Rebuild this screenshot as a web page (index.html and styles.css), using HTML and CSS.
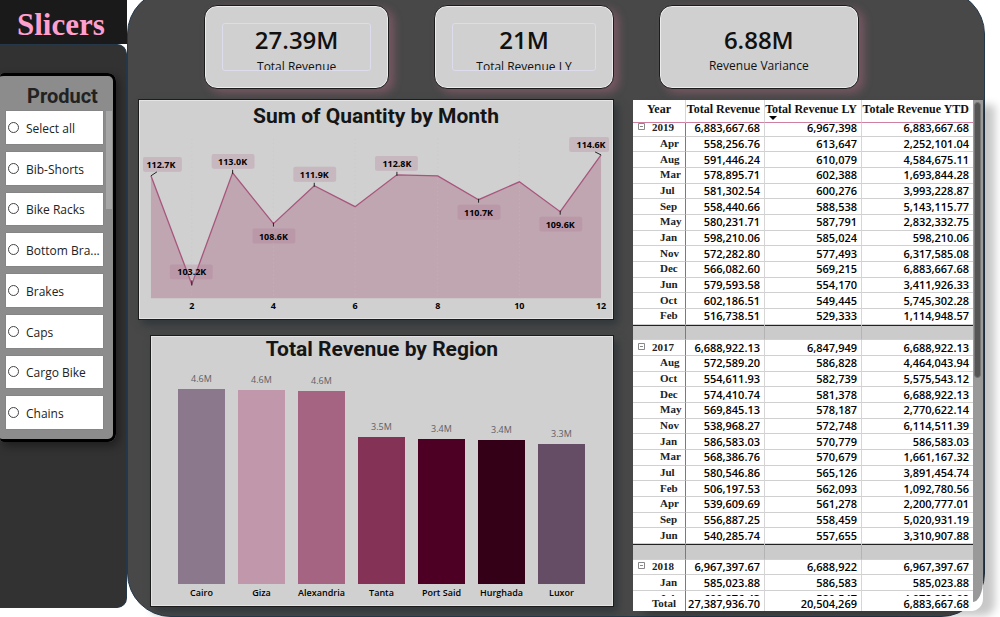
FILE: index.html
```html
<!DOCTYPE html>
<html lang="en">
<head>
  <meta charset="UTF-8" />
  <title>Sales Dashboard</title>
  <link rel="stylesheet" href="styles.css">
</head>
<body>
  <aside class="sidebar">
    <h1 class="sidebar-title">Slicers</h1>
    <div class="sidebar-panel">
      <fieldset class="slicer">
        <legend class="slicer-title">Product</legend>
        <div class="slicer-body">
          <div class="slicer-list">
            <label class="slicer-item"><input type="radio" name="product" /><span>Select all</span></label>
            <label class="slicer-item"><input type="radio" name="product" /><span>Bib-Shorts</span></label>
            <label class="slicer-item"><input type="radio" name="product" /><span>Bike Racks</span></label>
            <label class="slicer-item"><input type="radio" name="product" /><span>Bottom Bra...</span></label>
            <label class="slicer-item"><input type="radio" name="product" /><span>Brakes</span></label>
            <label class="slicer-item"><input type="radio" name="product" /><span>Caps</span></label>
            <label class="slicer-item"><input type="radio" name="product" /><span>Cargo Bike</span></label>
            <label class="slicer-item"><input type="radio" name="product" /><span>Chains</span></label>
          </div>
          <div class="slicer-scroll"></div>
        </div>
      </fieldset>
    </div>
  </aside>

  <main class="board">
    <section class="kpis">
      <div class="kpi">
        <div class="kpi-frame">
          <div class="kpi-value">27.39M</div>
          <div class="kpi-label">Total Revenue</div>
        </div>
      </div>
      <div class="kpi">
        <div class="kpi-frame">
          <div class="kpi-value">21M</div>
          <div class="kpi-label">Total Revenue LY</div>
        </div>
      </div>
      <div class="kpi">
        <div class="kpi-frame plain">
          <div class="kpi-value">6.88M</div>
          <div class="kpi-label">Revenue Variance</div>
        </div>
      </div>
    </section>

    <div class="content">
      <div class="charts">
        <section class="card">
          <h2>Sum of Quantity by Month</h2>
          <svg class="area-chart" viewBox="0 0 476 187">
            <polygon class="area" points="12,43 53,152 94,40 135,91 176,53 217,74 259,42 300,43 341,67 382,49 423,79 464,22 464,166 12,166" />
            <g class="grid-lines">
              <path d="M53 6V166M135 6V166M217 6V166M300 6V166M382 6V166" />
            </g>
            <polyline class="line" points="12,43 53,152 94,40 135,91 176,53 217,74 259,42 300,43 341,67 382,49 423,79 464,22" />
            <path class="ticks" d="M12 43L18 39M53 148V153M94 37V41M135 90V94M176 50V54M259 39V43M341 66V70M423 78V82M464 22L458 19" />
            <g class="tags">
              <rect x="4" y="24" width="39" height="15" rx="2" />
              <rect x="31" y="132" width="43" height="15" rx="2" />
              <rect x="73" y="21" width="43" height="15" rx="2" />
              <rect x="114" y="96" width="43" height="15" rx="2" />
              <rect x="155" y="34" width="43" height="15" rx="2" />
              <rect x="237" y="23" width="43" height="15" rx="2" />
              <rect x="320" y="72" width="43" height="15" rx="2" />
              <rect x="402" y="84" width="43" height="15" rx="2" />
              <rect x="432" y="4" width="40" height="15" rx="2" />
            </g>
            <g class="tag-text">
              <text x="22" y="35">112.7K</text>
              <text x="53" y="143">103.2K</text>
              <text x="94" y="32">113.0K</text>
              <text x="135" y="107">108.6K</text>
              <text x="176" y="45">111.9K</text>
              <text x="259" y="34">112.8K</text>
              <text x="341" y="83">110.7K</text>
              <text x="423" y="95">109.6K</text>
              <text x="454" y="15">114.6K</text>
              <text x="53" y="177">2</text>
              <text x="135" y="177">4</text>
              <text x="217" y="177">6</text>
              <text x="300" y="177">8</text>
              <text x="382" y="177">10</text>
              <text x="464" y="177">12</text>
            </g>
          </svg>
        </section>

        <section class="card card-bars">
          <h2>Total Revenue by Region</h2>
          <div class="bars" id="bars"></div>
        </section>
      </div>

      <section class="matrix">
        <div class="matrix-scroll" id="matrixScroll">
          <table>
            <thead>
              <tr>
                <th class="year-head">Year</th>
                <th>Total Revenue</th>
                <th class="sorted">Total Revenue LY</th>
                <th>Totale Revenue YTD</th>
              </tr>
            </thead>
            <tbody id="matrixRows"></tbody>
            <tfoot>
              <tr><th>Total</th><td>27,387,936.70</td><td>20,504,269</td><td>6,883,667.68</td></tr>
            </tfoot>
          </table>
        </div>
        <div class="matrix-track"><div class="matrix-thumb"></div></div>
      </section>
    </div>
  </main>

  <script>
    const regions = [
      { name: 'Cairo', label: '4.6M', height: 195, color: '#8b788c' },
      { name: 'Giza', label: '4.6M', height: 194, color: '#c198ab' },
      { name: 'Alexandria', label: '4.6M', height: 193, color: '#a56582' },
      { name: 'Tanta', label: '3.5M', height: 147, color: '#843357' },
      { name: 'Port Said', label: '3.4M', height: 145, color: '#4d0023' },
      { name: 'Hurghada', label: '3.4M', height: 144, color: '#330018' },
      { name: 'Luxor', label: '3.3M', height: 140, color: '#664d66' }
    ];

    document.getElementById('bars').innerHTML = regions.map(r => `
      <div class="bar-col">
        <span class="bar-value">${r.label}</span>
        <div class="bar" style="height:${r.height}px;background:${r.color}"></div>
        <span class="bar-name">${r.name}</span>
      </div>`).join('');

    const years = [
      [
        ['2019', '6,883,667.68', '6,967,398', '6,883,667.68'],
        ['Apr', '558,256.76', '613,647', '2,252,101.04'],
        ['Aug', '591,446.24', '610,079', '4,584,675.11'],
        ['Mar', '578,895.71', '602,388', '1,693,844.28'],
        ['Jul', '581,302.54', '600,276', '3,993,228.87'],
        ['Sep', '558,440.66', '588,538', '5,143,115.77'],
        ['May', '580,231.71', '587,791', '2,832,332.75'],
        ['Jan', '598,210.06', '585,024', '598,210.06'],
        ['Nov', '572,282.80', '577,493', '6,317,585.08'],
        ['Dec', '566,082.60', '569,215', '6,883,667.68'],
        ['Jun', '579,593.58', '554,170', '3,411,926.33'],
        ['Oct', '602,186.51', '549,445', '5,745,302.28'],
        ['Feb', '516,738.51', '529,333', '1,114,948.57']
      ],
      [
        ['2017', '6,688,922.13', '6,847,949', '6,688,922.13'],
        ['Aug', '572,589.20', '586,828', '4,464,043.94'],
        ['Oct', '554,611.93', '582,739', '5,575,543.12'],
        ['Dec', '574,410.74', '581,378', '6,688,922.13'],
        ['May', '569,845.13', '578,187', '2,770,622.14'],
        ['Nov', '538,968.27', '572,748', '6,114,511.39'],
        ['Jan', '586,583.03', '570,779', '586,583.03'],
        ['Mar', '568,386.76', '570,679', '1,661,167.32'],
        ['Jul', '580,546.86', '565,126', '3,891,454.74'],
        ['Feb', '506,197.53', '562,093', '1,092,780.56'],
        ['Apr', '539,609.69', '561,278', '2,200,777.01'],
        ['Sep', '556,887.25', '558,459', '5,020,931.19'],
        ['Jun', '540,285.74', '557,655', '3,310,907.88']
      ],
      [
        ['2018', '6,967,397.67', '6,688,922', '6,967,397.67'],
        ['Jan', '585,023.88', '586,583', '585,023.88'],
        ['Jul', '600,276.43', '580,547', '4,078,230.09']
      ]
    ];

    const toggle = '<svg class="toggle" viewBox="0 0 7 7"><path d="M.5 .5H6.5V6.5H.5ZM2 3.5H5" /></svg>';
    const spacer = '<tr class="spacer"><th></th><td>&nbsp;</td><td></td><td></td></tr>';

    document.getElementById('matrixRows').innerHTML = years.map(rows => rows.map((row, i) => {
      const head = i === 0 ? `<th class="year">${toggle}${row[0]}</th>` : `<th>${row[0]}</th>`;
      return `<tr>${head}${row.slice(1).map(v => `<td>${v}</td>`).join('')}</tr>`;
    }).join('')).join(spacer);

    document.getElementById('matrixScroll').scrollTop = 2;
  </script>
</body>
</html>
```
FILE: styles.css
```css
* {
  box-sizing: border-box;
}

body {
  margin: 0;
  display: flex;
  min-height: 100vh;
  overflow: hidden;
  background: #fff;
  font-family: "Open Sans", "Noto Sans", sans-serif;
  color: #111;
}

h1, h2 {
  margin: 0;
}

/* Sidebar */
.sidebar {
  width: 127px;
  flex: none;
  display: flex;
  flex-direction: column;
  padding-bottom: 9px;
}

.sidebar-title {
  height: 44px;
  padding-left: 17px;
  background: #1a1a1a;
  color: #ff9fce;
  font: bold 31px/49px "Liberation Serif", serif;
}

.sidebar-panel {
  flex: 1;
  padding-top: 28px;
  background: #323232;
  border: solid #24384a;
  border-width: 1px 1px 1px 0;
  border-radius: 0 10px 10px 0;
}

.slicer {
  width: 116px;
  height: 369px;
  margin: 0;
  padding: 35px 1px 0 6px;
  background: #8c8c8c;
  border: solid #000;
  border-width: 3px 3px 3px 0;
  border-radius: 4px 8px 8px 4px;
  box-shadow: 3px 4px 10px rgba(0, 0, 0, 0.4);
}

.slicer-title {
  float: left;
  width: 100%;
  margin-top: -29px;
  padding: 0 0 0 21px;
  color: #222;
  font: bold 20px/28px Roboto, sans-serif;
}

.slicer-body {
  clear: both;
  display: flex;
  gap: 3px;
}

.slicer-list {
  flex: 1;
  height: 318px;
  display: flex;
  flex-direction: column;
  gap: 8px;
}

.slicer-item {
  flex: 1;
  display: flex;
  align-items: center;
  gap: 7px;
  padding-left: 2px;
  background: #fff;
  color: #222;
  font-size: 12px;
  line-height: 18px;
  white-space: nowrap;
  box-shadow: 0 0 1px #666;
}

.slicer-item span {
  padding-top: 3px;
}

.slicer-item input {
  appearance: none;
  width: 11px;
  height: 11px;
  flex: none;
  margin: 0;
  border: 1px solid #444;
  border-radius: 50%;
}

.slicer-item input:checked {
  background: #444;
}

.slicer-scroll {
  width: 6px;
  height: 98px;
  background: #a6a6a6;
}

/* Main board */
.board {
  flex: 1;
  min-width: 0;
  margin: -10px 15px 0 0;
  padding: 14px 1px 4px 10px;
  background: #484848;
  border: 1px solid #24384a;
  border-radius: 44px;
}

.kpis {
  display: grid;
  grid-template-columns: 185fr 179fr 200fr;
  gap: 45px;
  padding: 0 124px 10px 66px;
}

.kpi {
  min-width: 0;
  height: 84px;
  padding: 17px 17px 0;
  background: #d0d0d0;
  border: 1px solid #1c1c1c;
  border-radius: 13px;
  box-shadow: inset 0 0 0 1px #ececec, 5px 4px 9px rgba(190, 110, 140, 0.4);
  text-align: center;
}

.kpi-frame {
  height: 48px;
  overflow: hidden;
  border: 1px solid #dcdcec;
  border-radius: 3px;
}

.kpi-frame.plain {
  overflow: visible;
  border-color: transparent;
}

.kpi-value {
  font-size: 24px;
  font-weight: 600;
  line-height: 32px;
}

.kpi-label {
  font-size: 12px;
  line-height: 22px;
}

.plain .kpi-label {
  line-height: 20px;
}

.content {
  display: grid;
  grid-template-columns: 476fr 350fr;
  column-gap: 19px;
}

.charts {
  display: flex;
  flex-direction: column;
  gap: 15px;
}

.card {
  background: #d0d0d0;
  border: 1px solid #1c1c1c;
  box-shadow: inset 0 0 0 1px #e4e4e4, 4px 5px 8px rgba(40, 48, 52, 0.7);
}

.card h2 {
  color: #151515;
  font: bold 21px/33px Roboto, sans-serif;
  text-align: center;
}

.area-chart {
  display: block;
  width: 100%;
}

.area {
  fill: #bfa6b1;
}

.line {
  fill: none;
  stroke: #a8557c;
  stroke-width: 1.3;
}

.ticks {
  fill: none;
  stroke: #222;
}

.grid-lines {
  fill: none;
  stroke: #c8c2c5;
  stroke-opacity: 0.5;
  stroke-dasharray: 1 3;
}

.tags {
  fill: #b07792;
  fill-opacity: 0.28;
}

.tag-text {
  fill: #000;
  font-size: 9px;
  font-weight: 700;
  text-anchor: middle;
}

.card-bars {
  margin-left: 12px;
  height: 272px;
}

.card.card-bars h2 {
  line-height: 26px;
}

.bars {
  display: flex;
  align-items: flex-end;
  gap: 13px;
  height: 238px;
  padding: 0 28px 0 27px;
}

.bar-col {
  flex: 1;
  min-width: 0;
  display: flex;
  flex-direction: column;
  align-items: center;
}

.bar {
  width: 100%;
}

.bar-value {
  color: #605e66;
  font-size: 9px;
  line-height: 14px;
  padding-bottom: 3px;
}

.bar-name {
  color: #000;
  font-size: 9px;
  font-weight: 600;
  line-height: 14px;
  padding-top: 2px;
  white-space: nowrap;
}

/* Matrix */
.matrix {
  display: flex;
  align-self: start;
  height: 511px;
  margin-top: 1px;
  background: #fff;
  border-radius: 0 0 12px 0;
  box-shadow: 12px 5px 8px rgba(0, 0, 0, 0.22);
}

.matrix-scroll {
  flex: 1;
  overflow: hidden;
}

.matrix table {
  width: 100%;
  height: 524px;
  table-layout: fixed;
  border-collapse: separate;
  border-spacing: 0;
}

.matrix th,
.matrix td {
  padding: 0 4px 0 0;
  border-right: 1px solid #d6d6d6;
  border-bottom: 1px solid #d0d0d0;
  font-size: 11px;
  line-height: 14px;
  white-space: nowrap;
}

.matrix td {
  font-weight: 600;
  text-align: right;
  color: #000;
}

.matrix td:last-child,
.matrix thead th:last-child {
  border-right: 0;
}

.matrix tbody th,
.matrix tfoot th {
  padding: 0 0 2px 27px;
  border-right: 1px solid #d9478c;
  font-family: "Liberation Serif", serif;
  line-height: 12px;
  text-align: left;
  color: #222;
}

.matrix thead th {
  position: sticky;
  top: 0;
  height: 23px;
  padding-bottom: 5px;
  background: #fff;
  border-bottom: 1px solid #cf7fa0;
  font: bold 12px/16px "Liberation Serif", serif;
  text-align: right;
}

.matrix thead .year-head {
  width: 53px;
  padding-right: 0;
  text-align: center;
}

.matrix thead th:nth-child(2) {
  width: 79px;
}

.matrix thead th:nth-child(3) {
  width: 97px;
}

.matrix thead .sorted::after {
  content: "";
  position: absolute;
  left: 4px;
  bottom: 2px;
  border: 4px solid transparent;
  border-top-color: #000;
  border-bottom: 0;
}

.matrix tbody .year {
  padding-left: 5px;
}

.toggle {
  width: 7px;
  height: 7px;
  margin-right: 7px;
  vertical-align: 1px;
  fill: none;
  stroke: #888;
}

.matrix .spacer th,
.matrix .spacer td {
  background: #cbcbcb;
  border-right-color: #b4b4b4;
  box-shadow: inset 0 1px #222;
}

.matrix .spacer th {
  border-right-color: #d9478c;
}

.matrix tfoot th,
.matrix tfoot td {
  position: sticky;
  bottom: 0;
  height: 15px;
  background: #fff;
  border-bottom: 0;
}

.matrix tfoot th {
  padding-left: 19px;
}

.matrix-track {
  width: 10px;
  margin-bottom: 9px;
  padding: 2px 2px 0 1px;
  background: #999;
  border-radius: 0 0 10px 0 / 0 0 22px 0;
}

.matrix-thumb {
  height: 276px;
  background: #555;
  border: 1px solid #777;
  border-radius: 4px;
}
```
